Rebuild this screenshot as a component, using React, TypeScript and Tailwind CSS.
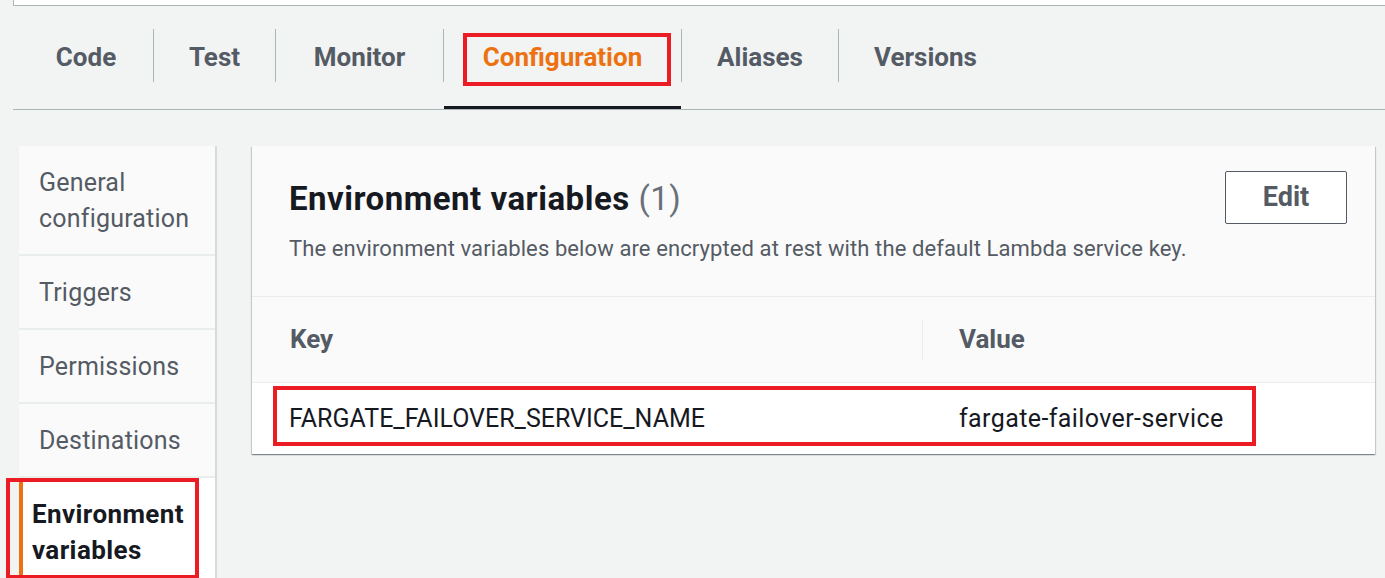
import React from 'react';

const tabs = [
    { label: 'Code', width: 'w-[134px]' },
    { label: 'Test', width: 'w-[121px]' },
    { label: 'Monitor', width: 'w-[167px]' },
    { label: 'Configuration', width: 'w-[237px]', active: true },
    { label: 'Aliases', width: 'w-[156px]' },
    { label: 'Versions', width: 'w-[173px]' },
];

const sideItems = [
    { label: 'General configuration', lines: ['General', 'configuration'] },
    { label: 'Triggers', lines: ['Triggers'] },
    { label: 'Permissions', lines: ['Permissions'] },
    { label: 'Destinations', lines: ['Destinations'] },
];

const RedBox = ({ className }: { className: string }) => (
    <div className={`absolute border-[4px] border-[#ec1c24] pointer-events-none ${className}`} />
);

export default function App() {
    return (
        <div
            className="relative w-[1385px] h-[578px] overflow-hidden bg-[#f2f3f3] text-[#16191f]"
            style={{ fontFamily: 'Roboto, "Liberation Sans", sans-serif' }}
        >
            <div className="ml-[13px] h-[6px] bg-white border-b border-l border-[#aab7b8]" />

            {/* tab bar */}
            <div className="ml-[13px] h-[104px] flex items-stretch border-b border-[#aab7b8]">
                <div className="flex pl-[6px]">
                    {tabs.map((tab, i) => (
                        <div key={tab.label} className="flex items-center">
                            {i > 0 && <div className="w-px h-[53px] bg-[#aab7b8] mb-[4px]" />}
                            <div className={`relative h-full flex items-center justify-center ${tab.width}`}>
                                <span className={`text-[26px] font-bold pb-[1px] ${tab.active ? 'text-[#ec7211]' : 'text-[#545b64]'}`}>
                                    {tab.label}
                                </span>
                                {tab.active && <div className="absolute left-0 right-0 bottom-0 h-[3px] bg-[#16191f]" />}
                            </div>
                        </div>
                    ))}
                </div>
            </div>

            <div className="flex items-start pt-[36px] pl-[19px] gap-[35px]">
                {/* side navigation */}
                <nav className="w-[198px] h-[440px] bg-[#fafafa] border-r-2 border-[#d5dbdb] flex flex-col">
                    {sideItems.map(item => (
                        <div key={item.label} className="px-[20px] pt-[19px] pb-[17px] border-b-2 border-[#eaeded]">
                            {item.lines.map(line => (
                                <div key={line} className="text-[25px] leading-[36px] tracking-[0.2px] text-[#545b64]">{line}</div>
                            ))}
                        </div>
                    ))}
                    <div className="flex-1 bg-white border-l-4 border-[#ec7211] pl-[9px] pt-[18px]">
                        <div className="text-[26px] leading-[36px] tracking-[0.4px] font-bold">Environment</div>
                        <div className="text-[26px] leading-[36px] tracking-[0.4px] font-bold">variables</div>
                    </div>
                </nav>

                {/* environment variables card */}
                <section className="w-[1123px] bg-white shadow-[0_1px_1px_0_rgba(0,28,36,0.3),1px_1px_1px_0_rgba(0,28,36,0.15),-1px_1px_1px_0_rgba(0,28,36,0.15)]">
                    <div className="h-[151px] bg-[#fafafa] border-b border-[#eaeded] pl-[37px] pr-[28px] pt-[25px] flex justify-between">
                        <div className="pt-[2px]">
                            <h2 className="text-[33px] leading-[52px] tracking-[0.5px] font-bold">
                                Environment variables <span className="font-normal text-[#687078]">(1)</span>
                            </h2>
                            <p className="mt-[10px] text-[22px] leading-[28px] tracking-[0.1px] text-[#545b64]">
                                The environment variables below are encrypted at rest with the default Lambda service key.
                            </p>
                        </div>
                        <button className="w-[122px] h-[53px] border border-[#545b64] rounded-[2px] bg-white text-[27px] font-bold text-[#545b64]">
                            Edit
                        </button>
                    </div>
                    <div className="h-[86px] bg-[#fafafa] border-b border-[#eaeded] flex items-center">
                        <div className="w-[670px] pl-[38px] text-[26px] font-bold text-[#545b64]">Key</div>
                        <div className="w-px h-[41px] bg-[#eaeded]" />
                        <div className="pl-[36px] text-[26px] font-bold text-[#545b64]">Value</div>
                    </div>
                    <div className="h-[71px] flex items-center">
                        <div className="w-[671px] pl-[37px] text-[25px]">FARGATE_FAILOVER_SERVICE_NAME</div>
                        <div className="pl-[36px] text-[25px] tracking-[0.4px]">fargate-failover-service</div>
                    </div>
                </section>
            </div>

            <RedBox className="left-[463px] top-[33px] w-[208px] h-[53px]" />
            <RedBox className="left-[273px] top-[386px] w-[983px] h-[60px]" />
            <RedBox className="left-[6px] top-[478px] w-[193px] h-[101px]" />
        </div>
    );
}
